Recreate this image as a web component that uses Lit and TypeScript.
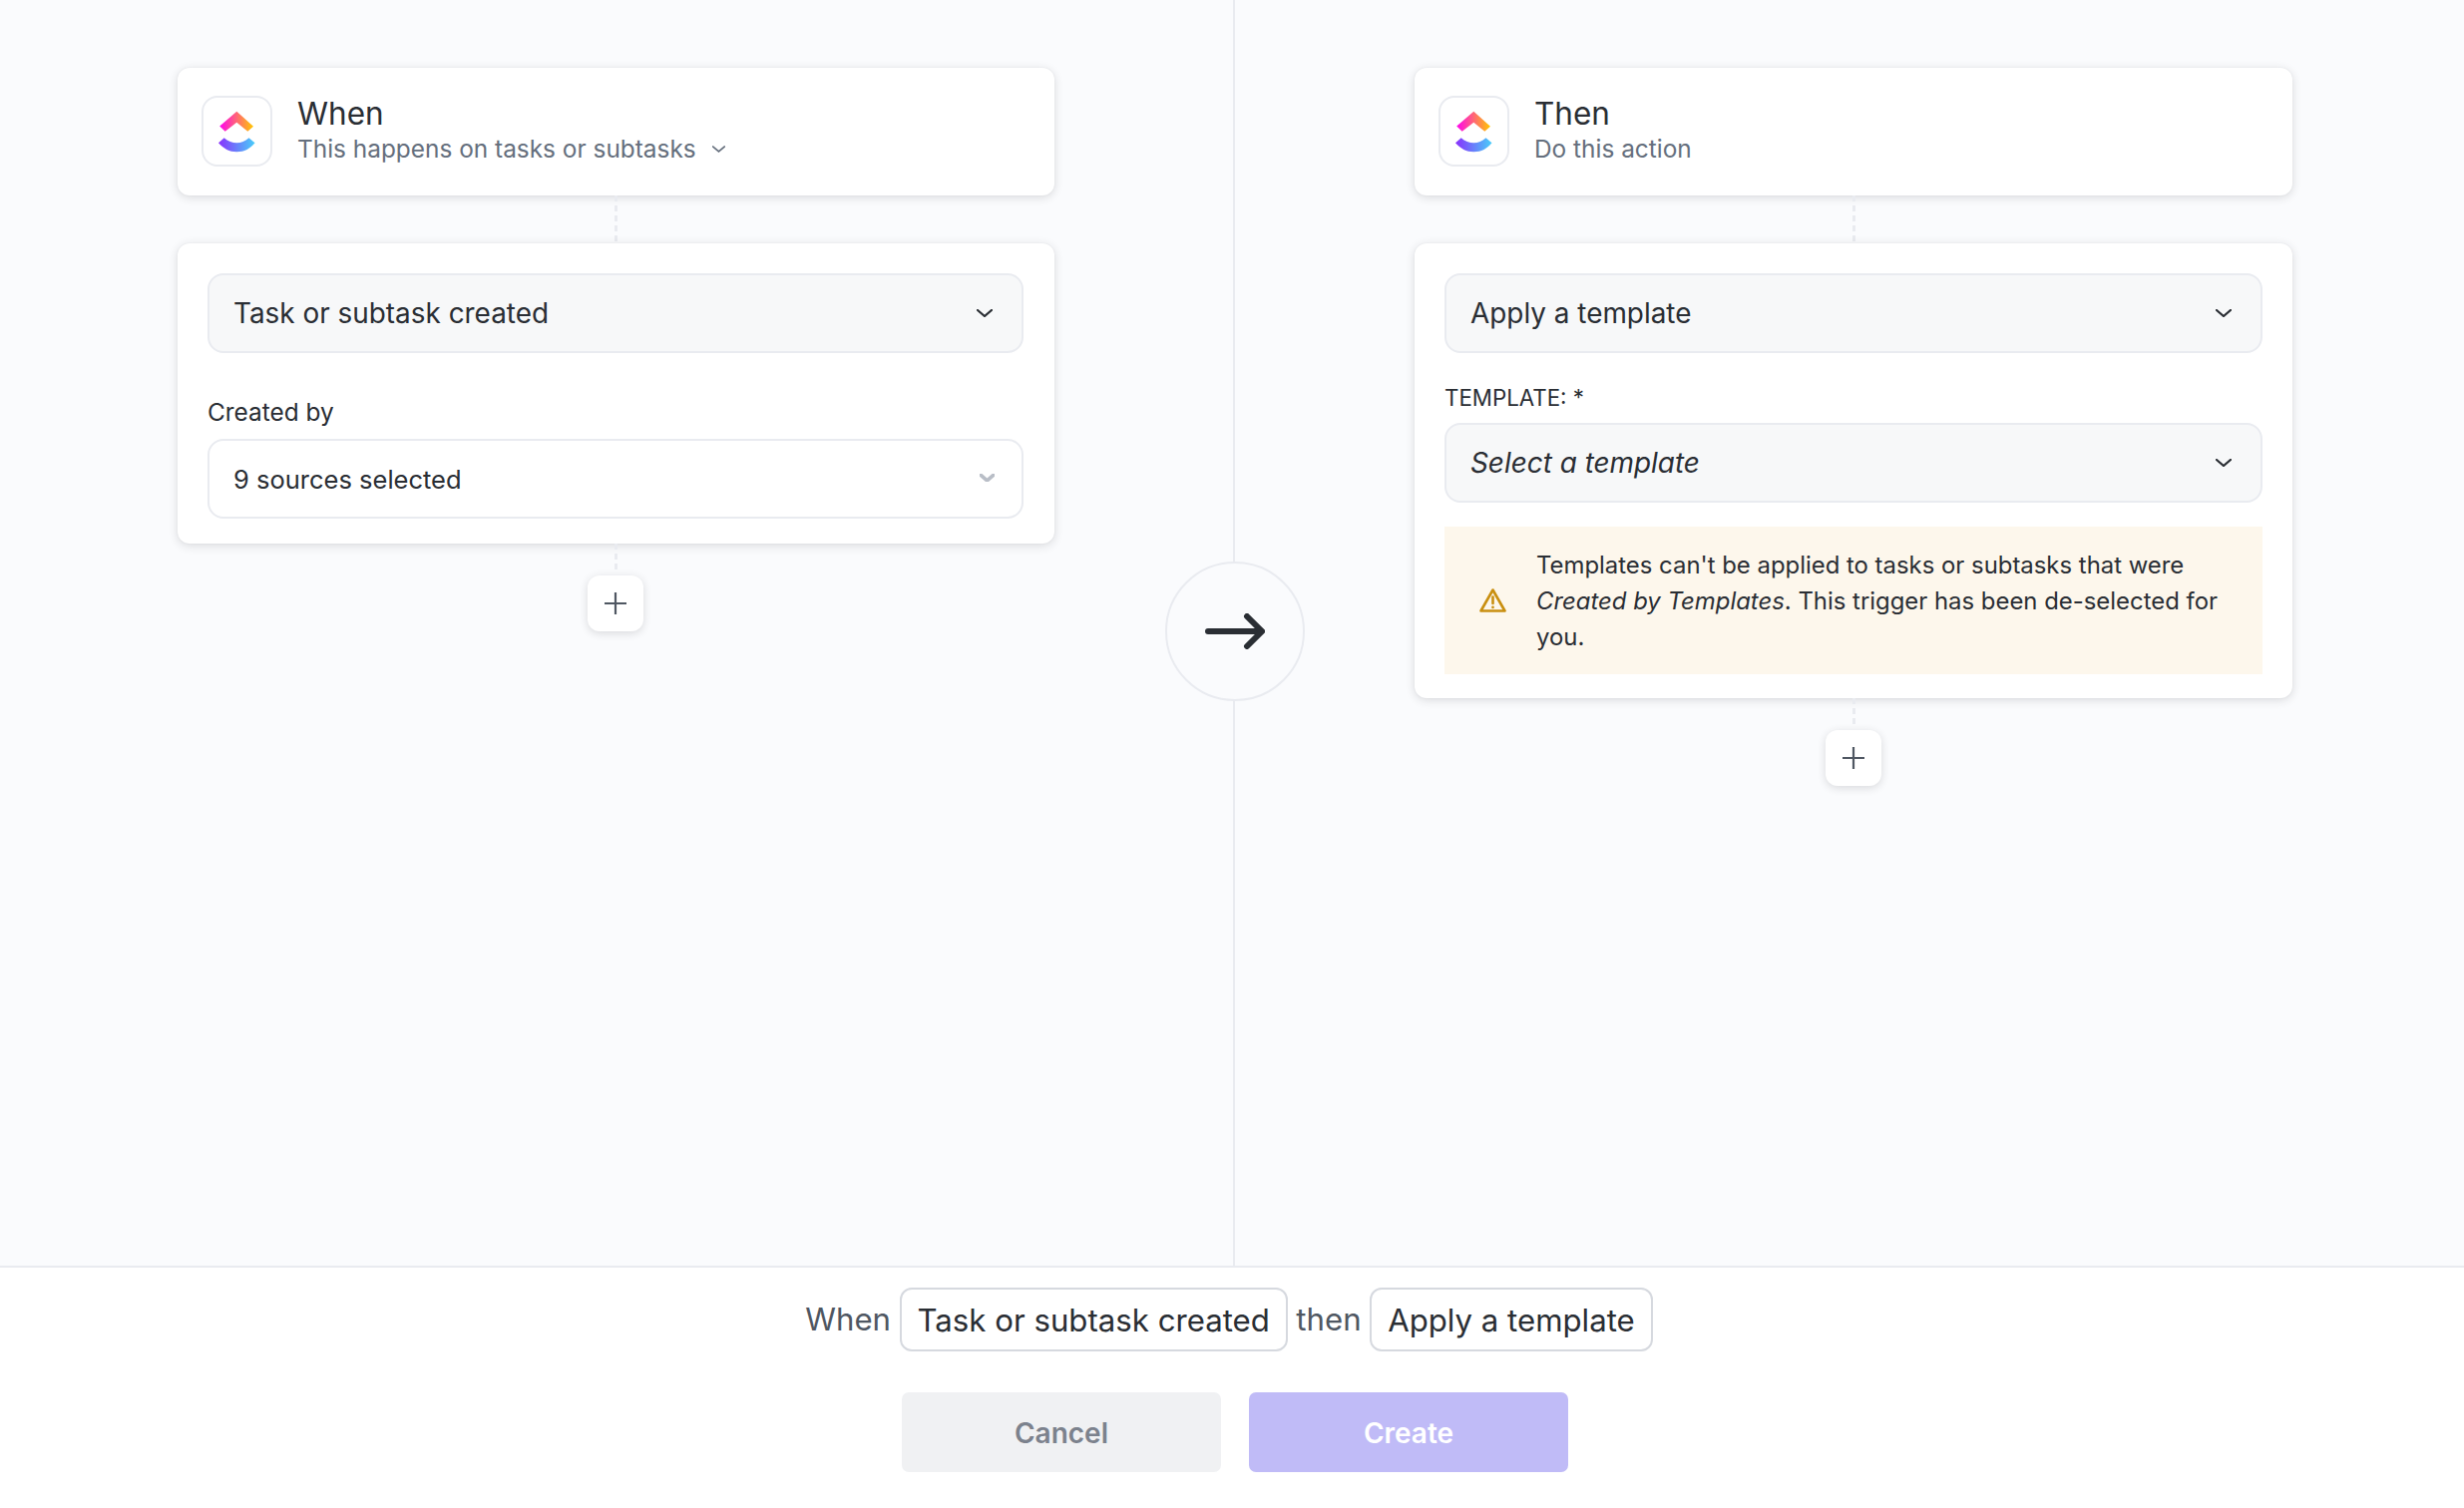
import { LitElement, html, css, svg } from "lit";
import { customElement } from "lit/decorators.js";

const chevron = (cls: string) => html`<svg class=${cls} viewBox="0 0 16 8" fill="none" stroke="currentColor" stroke-linecap="square" stroke-linejoin="miter"><path d="M1 1 L8 7 L15 1"/></svg>`;

let gid = 0;
const logo = () => {
  const a = `lg${gid++}`;
  const b = `lg${gid++}`;
  return html`<div class="logo"><svg viewBox="0 0 71 71" width="71" height="71">
    <defs>
      <linearGradient id=${a} x1="18" y1="0" x2="52" y2="0" gradientUnits="userSpaceOnUse"><stop offset="0" stop-color="#ff02f0"/><stop offset="1" stop-color="#ffc800"/></linearGradient>
      <linearGradient id=${b} x1="17" y1="0" x2="53" y2="0" gradientUnits="userSpaceOnUse"><stop offset="0" stop-color="#8930fd"/><stop offset="1" stop-color="#49ccf9"/></linearGradient>
    </defs>
    ${svg`<path fill="url(#${a})" d="M35.3 15.7 L52 30.7 L46.3 35.7 L35.3 26.7 L23.7 35.7 L18.2 30.5 Z"/>
    <path fill="url(#${b})" d="M22.7 42.3 L17 47.3 C22 53 28 56.3 35.3 56.3 C43 56.3 49 53 53.5 47.3 L47.5 42.3 C43.5 45.5 40 47.3 35.3 47.3 C31 47.3 26.5 45.5 22.7 42.3 Z"/>`}
  </svg></div>`;
};

const connector = (cls = "") => html`<div class="connector ${cls}"></div>`;
const addBtn = () => html`<div class="add"><svg viewBox="0 0 22 22" width="22" height="22" fill="none" stroke="#4f5762" stroke-width="2.2"><path d="M11 0 V22 M0 11 H22"/></svg></div>`;

@customElement("app-root")
export class AppRoot extends LitElement {
  static styles = css`
    :host { display: flex; flex-direction: column; width: 2470px; height: 1512px; font-family: Inter, "Liberation Sans", sans-serif; color: #2a2e34; background: #fff; overflow: hidden; }
    * { box-sizing: border-box; }
    .main { position: relative; height: 1269px; display: grid; grid-template-columns: 1238px 1232px; background: #fafbfd; }
    .col { padding-top: 68px; }
    .col.left { padding-left: 178px; border-right: 2px solid #e9ebf0; }
    .col.right { padding-left: 180px; }
    .stack { width: 878.5px; display: flex; flex-direction: column; align-items: center; }
    .right .stack { width: 880px; }
    .card { width: 100%; background: #fff; border-radius: 12px; box-shadow: 0 2px 10px rgba(42, 46, 52, 0.16), 0 0 2px rgba(42, 46, 52, 0.06); }
    .head { height: 128px; padding: 28px 24px 0 24px; display: flex; gap: 25px; }
    .logo { width: 71px; height: 71px; flex: none; border: 2px solid #e9ebf0; border-radius: 16px; position: relative; }
    .logo svg { position: absolute; left: -2px; top: -2px; display: block; }
    .titles { display: flex; flex-direction: column; }
    .title { font-size: 31.5px; line-height: 37px; margin-top: -1px; }
    .sub { font-size: 24.4px; line-height: 34px; color: #656f7d; display: flex; align-items: center; gap: 16px; }
    .sub-chev { width: 13px; height: 7px; stroke-width: 2; color: #656f7d; }
    .connector { width: 3px; height: 48px; background: repeating-linear-gradient(to bottom, #e9ebf0 0 6px, transparent 6px 10px); }
    .connector.short { height: 32px; padding-bottom: 4px; background-clip: content-box; }
    .body { padding: 30px 31px 25px 30px; }
    .right .body { padding: 30px 30px 24px 30px; }
    .select { height: 79.5px; padding: 1px 26px 0 24px; border-radius: 16px; border: 2px solid #e9ebf0; background: #f7f8f9; display: flex; align-items: center; justify-content: space-between; font-size: 27.9px; }
    .select.plain { background: #fff; font-size: 25.5px; }
    .select em { font-style: italic; }
    .chev { width: 16px; height: 8px; stroke-width: 2.2; color: #2a2e34; margin-right: 3px; }
    .chev-gray { width: 15px; height: 8px; stroke-width: 4; color: #b9bec7; margin-right: 1px; margin-top: -2px; }
    .label { font-size: 24.4px; line-height: 30px; margin: 44.5px 0 12px; }
    .label.caps { font-size: 22.3px; margin: 30px 0 10.5px; line-height: 30px; }
    .warn { margin-top: 24.5px; height: 148px; background: #fdf7ec; padding: 2px 30px 0 35px; display: flex; align-items: center; gap: 30px; font-size: 23.9px; line-height: 36px; }
    .warn svg { flex: none; display: block; margin-top: -2px; }
    .warn i { font-style: italic; }
    .add { width: 56px; height: 56px; border-radius: 12px; background: #fff; box-shadow: 0 2px 8px rgba(42, 46, 52, 0.16); display: flex; align-items: center; justify-content: center; }
    .add svg { display: block; }
    .circle { position: absolute; left: 1168px; top: 563px; width: 140px; height: 140px; border-radius: 50%; border: 2px solid #e9ebf0; background: #fafbfd; display: flex; align-items: center; justify-content: center; }
    .footer { flex: 1; border-top: 2px solid #e9ebf0; background: #fff; display: flex; flex-direction: column; align-items: center; padding-top: 20px; }
    .sentence { display: flex; align-items: center; gap: 8.5px; font-size: 31.2px; height: 64px; color: #4f5762; margin-right: 6px; }
    .pill { height: 64px; border: 2px solid #d6d9df; border-radius: 12px; background: #fff; padding: 1px 16px 0; display: flex; align-items: center; color: #2a2e34; }
    .buttons { margin-top: 41px; margin-left: 6px; display: flex; gap: 28px; }
    .btn { width: 320px; height: 80px; padding-top: 1px; border-radius: 7px; display: flex; align-items: center; justify-content: center; font-size: 28px; font-weight: 600; }
    .cancel { background: #f0f1f3; color: #7c828d; }
    .create { background: #c0bbf7; color: #fff; }
  `;

  render() {
    return html`
      <div class="main">
        <div class="col left">
          <div class="stack">
            <div class="card head">
              ${logo()}
              <div class="titles">
                <div class="title">When</div>
                <div class="sub">This happens on tasks or subtasks ${chevron("sub-chev")}</div>
              </div>
            </div>
            ${connector()}
            <div class="card body">
              <div class="select"><span>Task or subtask created</span>${chevron("chev")}</div>
              <div class="label">Created by</div>
              <div class="select plain"><span>9 sources selected</span>${chevron("chev-gray")}</div>
            </div>
            ${connector("short")}
            ${addBtn()}
          </div>
        </div>
        <div class="col right">
          <div class="stack">
            <div class="card head">
              ${logo()}
              <div class="titles">
                <div class="title">Then</div>
                <div class="sub">Do this action</div>
              </div>
            </div>
            ${connector()}
            <div class="card body">
              <div class="select"><span>Apply a template</span>${chevron("chev")}</div>
              <div class="label caps">TEMPLATE: *</div>
              <div class="select"><em>Select a template</em>${chevron("chev")}</div>
              <div class="warn">
                <svg viewBox="0 0 27 24" width="27" height="24" fill="none" stroke="#c98f10" stroke-width="2.6" stroke-linejoin="round" stroke-linecap="round"><path d="M13.5 1.5 L25.5 22.5 H1.5 Z"/><path d="M13.5 8.5 V15"/><path d="M13.5 18.8 V19"/></svg>
                <div>Templates can't be applied to tasks or subtasks that were <i>Created by Templates</i>. This trigger has been de-selected for you.</div>
              </div>
            </div>
            ${connector("short")}
            ${addBtn()}
          </div>
        </div>
        <div class="circle">
          <svg viewBox="0 0 60 36" width="60" height="36" fill="none" stroke="#2a2e34" stroke-width="6" stroke-linecap="round" stroke-linejoin="miter"><path d="M3 18 H56"/><path d="M42 3 L57 18 L42 33"/></svg>
        </div>
      </div>
      <div class="footer">
        <div class="sentence">
          <span>When</span><div class="pill">Task or subtask created</div><span>then</span><div class="pill">Apply a template</div>
        </div>
        <div class="buttons">
          <div class="btn cancel">Cancel</div>
          <div class="btn create">Create</div>
        </div>
      </div>
    `;
  }
}
